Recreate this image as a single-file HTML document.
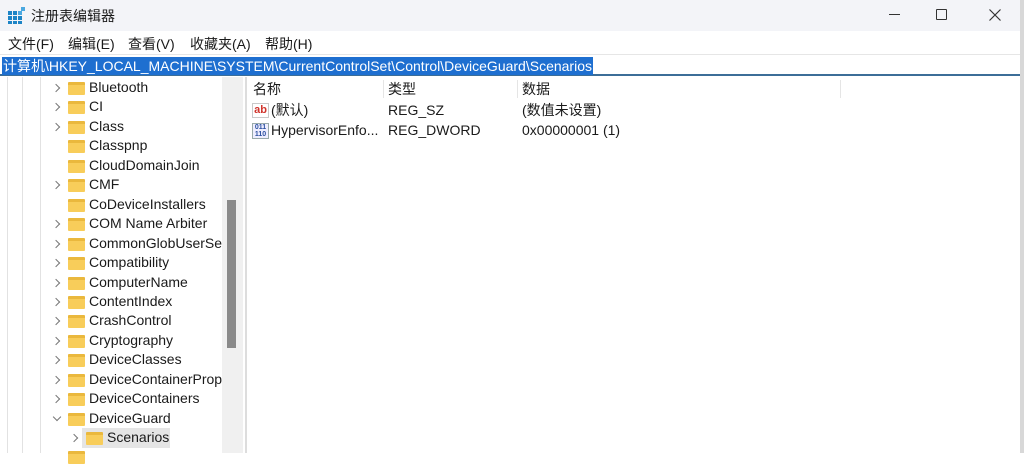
<!DOCTYPE html>
<html><head><meta charset="utf-8"><style>
*{margin:0;padding:0;box-sizing:border-box}
body{width:1024px;height:453px;overflow:hidden;background:#fff;font-family:"Liberation Sans","Noto Sans CJK SC",sans-serif;font-size:14px;color:#1a1a1a;position:relative}
.abs{position:absolute}
.title{left:0;top:0;width:1020px;height:31px;background:#f3f4f8}
.menu{left:0;top:31px;width:1020px;height:23px;background:#fff}
.menu span{position:absolute;top:3px;font-size:14px}
.addr{left:0;top:54px;width:1020px;height:22px;border-top:1px solid #e6e6e6;border-bottom:2px solid #3c6e98;background:#fff}
.sel{position:absolute;left:2px;top:2px;height:18px;background:#1e6fd0;color:#fff;font-size:14px;line-height:18px;padding:0 1px;white-space:nowrap}
.row{position:absolute;height:19px;line-height:19px;font-size:14px;white-space:nowrap}
.chev{position:absolute;width:6px;height:6px;border-right:1.2px solid #777;border-bottom:1.2px solid #777;transform:rotate(-45deg)}
.fold{position:absolute;width:17px;height:13px;background:#f8cd5a;border-top:3px solid #eab83d;border-radius:1px}
.vl{position:absolute;top:77px;bottom:0;width:1px;background:#e2e2e2}
</style></head><body>
<div class="abs title"></div>
<svg class="abs" style="left:8px;top:7px" width="18" height="17" viewBox="0 0 18 17"><g fill="#1c84c6"><rect x="0" y="4" width="4" height="4"/><rect x="5" y="4" width="4" height="4"/><rect x="0" y="9" width="4" height="4"/><rect x="5" y="9" width="4" height="4"/><rect x="10" y="9" width="4" height="4"/><rect x="0" y="14" width="4" height="3"/><rect x="5" y="14" width="4" height="3"/><rect x="10" y="14" width="4" height="3"/><rect x="10" y="4" width="4" height="4" fill="#4aa8e0"/><rect x="13" y="0" width="4" height="4" fill="#4aa8e0"/></g></svg>
<div class="abs" style="left:31px;top:6px;font-size:14px">注册表编辑器</div>
<div class="abs" style="left:889px;top:14px;width:11px;height:1px;background:#333"></div>
<div class="abs" style="left:936px;top:9px;width:11px;height:11px;border:1.3px solid #333;border-radius:1px"></div>
<svg class="abs" style="left:989px;top:9px" width="12" height="12"><path d="M0.5 0.5L11.5 11.5M11.5 0.5L0.5 11.5" stroke="#333" stroke-width="1.2"/></svg>
<div class="abs menu"><span style="left:8px">文件(F)</span><span style="left:68px">编辑(E)</span><span style="left:128px">查看(V)</span><span style="left:190px">收藏夹(A)</span><span style="left:265px">帮助(H)</span></div>
<div class="abs addr"><div class="sel">计算机\HKEY_LOCAL_MACHINE\SYSTEM\CurrentControlSet\Control\DeviceGuard\Scenarios</div></div>
<div class="abs" style="left:1020px;top:0;width:4px;height:453px;background:#d8d8d8"></div>
<div class="vl" style="left:7px"></div><div class="vl" style="left:22px"></div><div class="vl" style="left:40px"></div>
<div class="abs" style="left:222px;top:77px;width:21px;height:376px;background:#f0f0f0"></div>
<div class="abs" style="left:227px;top:200px;width:9px;height:148px;background:#8a8a8a"></div>
<div class="abs" style="left:245px;top:77px;width:2px;height:376px;background:#ddd"></div>
<div class="abs" style="left:82px;top:428px;width:88px;height:20px;background:#e5e5e5"></div>
<div id="tree"></div>
<script>
var n=["Bluetooth","CI","Class","Classpnp","CloudDomainJoin","CMF","CoDeviceInstallers","COM Name Arbiter","CommonGlobUserSe","Compatibility","ComputerName","ContentIndex","CrashControl","Cryptography","DeviceClasses","DeviceContainerProp","DeviceContainers","DeviceGuard"];
var nc={"Classpnp":1,"CloudDomainJoin":1,"CoDeviceInstallers":1};var h="";
n.forEach(function(t,i){var y=78+i*19.45;
if(!nc[t]){if(t=="DeviceGuard")h+='<div class="chev" style="left:54px;top:'+(y+5)+'px;transform:rotate(45deg)"></div>';else h+='<div class="chev" style="left:53px;top:'+(y+7)+'px"></div>';}
h+='<div class="fold" style="left:68px;top:'+(y+4)+'px"></div><div class="row" style="left:89px;top:'+y+'px;width:133px;overflow:hidden">'+t+'</div>';});
var y=78+18*19.45;h+='<div class="chev" style="left:71px;top:'+(y+7)+'px"></div><div class="fold" style="left:86px;top:'+(y+4)+'px"></div><div class="row" style="left:107px;top:'+y+'px">Scenarios</div>';
h+='<div class="fold" style="left:68px;top:'+(y+23)+'px"></div>';
document.getElementById('tree').innerHTML=h;
</script>
<div class="row" style="left:253px;top:80px">名称</div>
<div class="row" style="left:388px;top:80px">类型</div>
<div class="row" style="left:522px;top:80px">数据</div>
<div class="abs" style="left:383px;top:80px;width:1px;height:18px;background:#e5e5e5"></div>
<div class="abs" style="left:517px;top:80px;width:1px;height:18px;background:#e5e5e5"></div>
<div class="abs" style="left:840px;top:80px;width:1px;height:18px;background:#e5e5e5"></div>
<div class="abs" style="left:252px;top:103px;width:17px;height:15px;background:#fff;border:1px solid #c9c9c9;color:#d0342c;font-weight:bold;font-size:11px;line-height:12px;text-align:center">ab</div>
<div class="row" style="left:271px;top:101px">(默认)</div>
<div class="row" style="left:388px;top:101px">REG_SZ</div>
<div class="row" style="left:522px;top:101px">(数值未设置)</div>
<div class="abs" style="left:252px;top:123px;width:17px;height:16px;border:1px solid #9aa;background:#eef;color:#2a4fa0;font-size:7px;line-height:7px;text-align:center;font-weight:bold">011<br>110</div>
<div class="row" style="left:271px;top:121px">HypervisorEnfo...</div>
<div class="row" style="left:388px;top:121px">REG_DWORD</div>
<div class="row" style="left:522px;top:121px">0x00000001 (1)</div>
</body></html>
